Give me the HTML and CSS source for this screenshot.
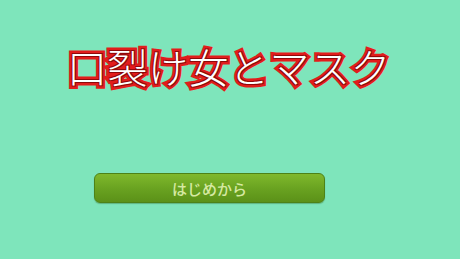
FILE: index.html
```html
<!DOCTYPE html>
<html lang="ja">
<head>
<meta charset="utf-8">
<link rel="stylesheet" href="styles.css">
</head>
<body>
<main class="screen">
  <h1 class="title">口裂け女とマスク</h1>
  <button class="start">はじめから</button>
</main>
</body>
</html>
```
FILE: styles.css
```css
html, body {
  margin: 0;
  padding: 0;
}
body {
  width: 460px;
  height: 259px;
  background: #7ee5bb;
  overflow: hidden;
}
.screen {
  display: flex;
  flex-direction: column;
  align-items: center;
  padding-top: 42px;
}
.title {
  margin: 0 0 0 -2px;
  font-family: "Noto Sans CJK JP", sans-serif;
  font-weight: 300;
  font-size: 40px;
  line-height: 48px;
  letter-spacing: 0.5px;
  color: #ffffff;
  -webkit-text-stroke: 7px #e21c1c;
  paint-order: stroke fill;
  text-shadow: 1px 1px 0 #8e0a0a, -1px -1px 0 #8e0a0a, 1px -1px 0 #8e0a0a, -1px 1px 0 #8e0a0a;
}
.start {
  align-self: flex-start;
  margin-top: 83px;
  margin-left: 94px;
  width: 231px;
  height: 30px;
  border: 1px solid #4d8217;
  border-radius: 6px;
  background: linear-gradient(#7fb82c, #6aa321 50%, #5b9118);
  box-shadow: 0 1px 1px rgba(40, 90, 20, 0.35);
  font-family: "Noto Sans CJK JP", sans-serif;
  font-weight: 500;
  font-size: 15px;
  color: #d6e9a2;
  padding: 0;
}
```
